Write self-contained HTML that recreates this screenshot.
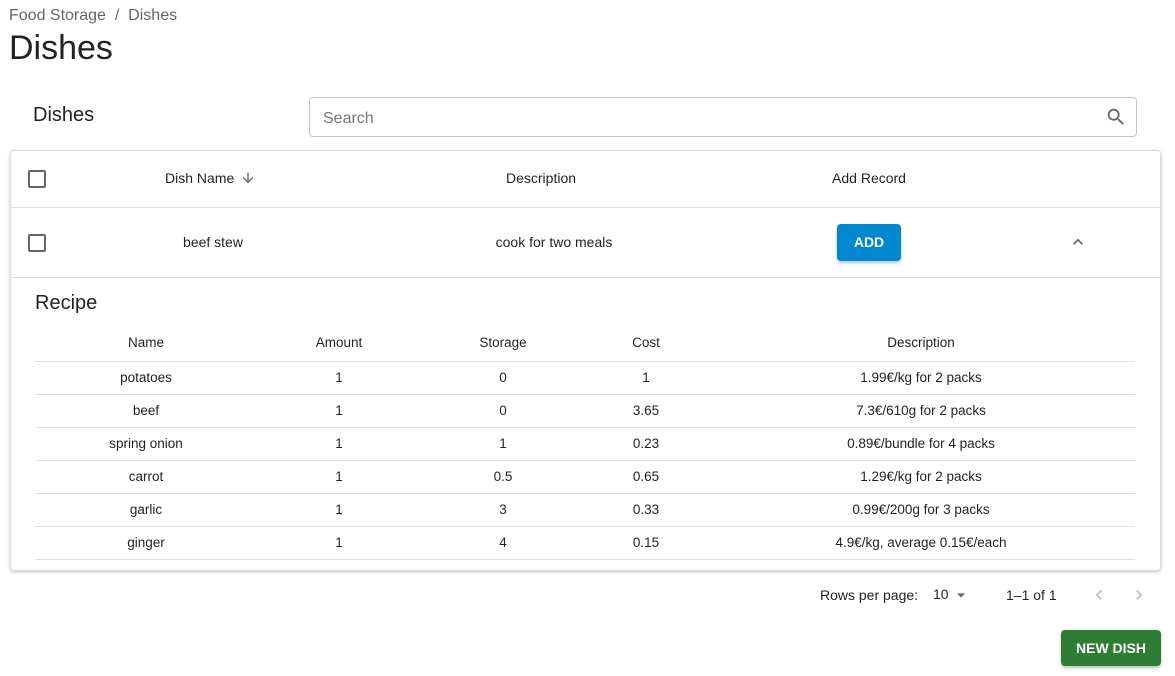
<!DOCTYPE html>
<html><head><style>
*{margin:0;padding:0;box-sizing:border-box}
body{width:1175px;height:676px;background:#fff;font-family:"Liberation Sans",Roboto,sans-serif;color:rgba(0,0,0,.87);position:relative;overflow:hidden}
.a{position:absolute;white-space:nowrap}
.c{transform:translateX(-50%)}
.cb{position:absolute;width:18px;height:18px;border:2px solid #666;border-radius:2px}
.ln{position:absolute;height:1px;background:#e0e0e0}
.t14{font-size:14px}
.t13{font-size:13.5px}
</style></head><body>
<div class="a" style="left:9px;top:7px;font-size:16px;color:#666">Food Storage &nbsp;/&nbsp; Dishes</div>
<div class="a" style="left:9px;top:29px;font-size:34px;color:#222">Dishes</div>
<div class="a" style="left:33px;top:104px;font-size:20px">Dishes</div>
<div class="a" style="left:309px;top:97px;width:828px;height:40px;border:1px solid #c4c4c4;border-radius:4px"></div>
<div class="a" style="left:323px;top:110px;font-size:16px;color:#777">Search</div>
<svg class="a" style="left:1105px;top:106px" width="22" height="22" viewBox="0 0 24 24"><path fill="#666" d="M15.5 14h-.79l-.28-.27A6.47 6.47 0 0 0 16 9.5 6.5 6.5 0 1 0 9.5 16c1.61 0 3.09-.59 4.23-1.57l.27.28v.79l5 4.99L20.49 19l-4.99-5zm-6 0C7.01 14 5 11.99 5 9.5S7.01 5 9.5 5 14 7.01 14 9.5 11.99 14 9.5 14z"/></svg>
<div class="a" style="left:10px;top:150px;width:1151px;height:421px;border:1px solid #ddd;border-radius:4px;box-shadow:0 1px 3px rgba(0,0,0,.25)"></div>
<div class="cb" style="left:28px;top:170px"></div>
<div class="a t14" style="left:165px;top:170px">Dish Name</div>
<svg class="a" style="left:240px;top:170px" width="16" height="16" viewBox="0 0 24 24"><path fill="#666" d="M20 12l-1.41-1.41L13 16.17V4h-2v12.17l-5.58-5.59L4 12l8 8 8-8z"/></svg>
<div class="a t14 c" style="left:541px;top:170px">Description</div>
<div class="a t14 c" style="left:869px;top:170px">Add Record</div>
<div class="ln" style="left:11px;width:1149px;top:207px"></div>
<div class="cb" style="left:28px;top:234px"></div>
<div class="a t14 c" style="left:213px;top:234px">beef stew</div>
<div class="a t14 c" style="left:554px;top:234px">cook for two meals</div>
<div class="a" style="left:837px;top:224px;width:64px;height:37px;background:#0288d1;border-radius:4px;color:#fff;font-size:14px;font-weight:bold;text-align:center;line-height:37px;box-shadow:0 2px 3px rgba(0,0,0,.25)">ADD</div>
<svg class="a" style="left:1068px;top:232px" width="20" height="20" viewBox="0 0 24 24"><path fill="#666" d="M7.41 15.41L12 10.83l4.59 4.58L18 14l-6-6-6 6z"/></svg>
<div class="ln" style="left:11px;width:1149px;top:277px"></div>
<div class="a" style="left:35px;top:292px;font-size:20px">Recipe</div>
<div class="a t13 c" style="left:146px;top:335px">Name</div>
<div class="a t13 c" style="left:339px;top:335px">Amount</div>
<div class="a t13 c" style="left:503px;top:335px">Storage</div>
<div class="a t13 c" style="left:646px;top:335px">Cost</div>
<div class="a t13 c" style="left:921px;top:335px">Description</div>
<div class="ln" style="left:35px;width:1100px;top:361px"></div>
<div class="a t13 c" style="left:146px;top:370px">potatoes</div><div class="a t13 c" style="left:339px;top:370px">1</div><div class="a t13 c" style="left:503px;top:370px">0</div><div class="a t13 c" style="left:646px;top:370px">1</div><div class="a t13 c" style="left:921px;top:370px">1.99€/kg for 2 packs</div><div class="ln" style="left:35px;width:1100px;top:394px"></div>
<div class="a t13 c" style="left:146px;top:403px">beef</div><div class="a t13 c" style="left:339px;top:403px">1</div><div class="a t13 c" style="left:503px;top:403px">0</div><div class="a t13 c" style="left:646px;top:403px">3.65</div><div class="a t13 c" style="left:921px;top:403px">7.3€/610g for 2 packs</div><div class="ln" style="left:35px;width:1100px;top:427px"></div>
<div class="a t13 c" style="left:146px;top:436px">spring onion</div><div class="a t13 c" style="left:339px;top:436px">1</div><div class="a t13 c" style="left:503px;top:436px">1</div><div class="a t13 c" style="left:646px;top:436px">0.23</div><div class="a t13 c" style="left:921px;top:436px">0.89€/bundle for 4 packs</div><div class="ln" style="left:35px;width:1100px;top:460px"></div>
<div class="a t13 c" style="left:146px;top:469px">carrot</div><div class="a t13 c" style="left:339px;top:469px">1</div><div class="a t13 c" style="left:503px;top:469px">0.5</div><div class="a t13 c" style="left:646px;top:469px">0.65</div><div class="a t13 c" style="left:921px;top:469px">1.29€/kg for 2 packs</div><div class="ln" style="left:35px;width:1100px;top:493px"></div>
<div class="a t13 c" style="left:146px;top:502px">garlic</div><div class="a t13 c" style="left:339px;top:502px">1</div><div class="a t13 c" style="left:503px;top:502px">3</div><div class="a t13 c" style="left:646px;top:502px">0.33</div><div class="a t13 c" style="left:921px;top:502px">0.99€/200g for 3 packs</div><div class="ln" style="left:35px;width:1100px;top:526px"></div>
<div class="a t13 c" style="left:146px;top:535px">ginger</div><div class="a t13 c" style="left:339px;top:535px">1</div><div class="a t13 c" style="left:503px;top:535px">4</div><div class="a t13 c" style="left:646px;top:535px">0.15</div><div class="a t13 c" style="left:921px;top:535px">4.9€/kg, average 0.15€/each</div><div class="ln" style="left:35px;width:1100px;top:559px"></div>
<div class="a t14" style="left:820px;top:587px">Rows per page:</div>
<div class="a t14" style="left:933px;top:586px">10</div>
<svg class="a" style="left:951px;top:585px" width="20" height="20" viewBox="0 0 24 24"><path fill="#666" d="M7 10l5 5 5-5z"/></svg>
<div class="a t14" style="left:1006px;top:587px">1–1 of 1</div>
<svg class="a" style="left:1089px;top:585px" width="20" height="20" viewBox="0 0 24 24"><path fill="#bbb" d="M15.41 7.41L14 6l-6 6 6 6 1.41-1.41L10.83 12z"/></svg>
<svg class="a" style="left:1129px;top:585px" width="20" height="20" viewBox="0 0 24 24"><path fill="#bbb" d="M10 6L8.59 7.41 13.17 12l-4.58 4.59L10 18l6-6z"/></svg>
<div class="a" style="left:1061px;top:630px;width:100px;height:36px;background:#2e7d32;border-radius:4px;color:#fff;font-size:14px;font-weight:bold;text-align:center;line-height:36px;box-shadow:0 2px 3px rgba(0,0,0,.25)">NEW DISH</div>
</body></html>
